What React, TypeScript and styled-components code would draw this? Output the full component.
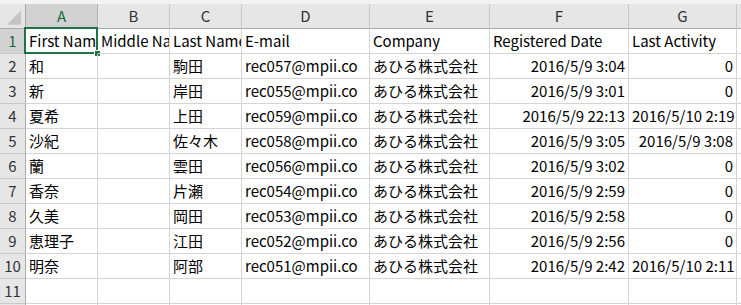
import React from 'react';
import styled, { createGlobalStyle } from 'styled-components';

const GlobalStyle = createGlobalStyle`
    html, body {
        margin: 0;
        padding: 0;
        background: #ffffff;
    }
    body {
        font-family: "Noto Sans CJK JP", "Noto Sans", sans-serif;
        overflow: hidden;
    }
`

const columns = [
    { label: 'A', width: 72 },
    { label: 'B', width: 72 },
    { label: 'C', width: 72 },
    { label: 'D', width: 128 },
    { label: 'E', width: 120 },
    { label: 'F', width: 139 },
    { label: 'G', width: 108 },
    { label: 'H', width: 80 },
];

type Row = { v: string[]; right?: number[] };

// right: indexes of cells that are right aligned (numbers / dates)
const rows: Row[] = [
    { v: ['First Nam', 'Middle Na', 'Last Name', 'E-mail', 'Company', 'Registered Date', 'Last Activity', 'Lead'] },
    { v: ['和', '', '駒田', 'rec057@mpii.co', 'あひる株式会社', '2016/5/9 3:04', '0', ''], right: [5, 6] },
    { v: ['新', '', '岸田', 'rec055@mpii.co', 'あひる株式会社', '2016/5/9 3:01', '0', ''], right: [5, 6] },
    { v: ['夏希', '', '上田', 'rec059@mpii.co', 'あひる株式会社', '2016/5/9 22:13', '2016/5/10 2:19', ''], right: [5, 6] },
    { v: ['沙紀', '', '佐々木', 'rec058@mpii.co', 'あひる株式会社', '2016/5/9 3:05', '2016/5/9 3:08', ''], right: [5, 6] },
    { v: ['蘭', '', '雲田', 'rec056@mpii.co', 'あひる株式会社', '2016/5/9 3:02', '0', ''], right: [5, 6] },
    { v: ['香奈', '', '片瀬', 'rec054@mpii.co', 'あひる株式会社', '2016/5/9 2:59', '0', ''], right: [5, 6] },
    { v: ['久美', '', '岡田', 'rec053@mpii.co', 'あひる株式会社', '2016/5/9 2:58', '0', ''], right: [5, 6] },
    { v: ['恵理子', '', '江田', 'rec052@mpii.co', 'あひる株式会社', '2016/5/9 2:56', '0', ''], right: [5, 6] },
    { v: ['明奈', '', '阿部', 'rec051@mpii.co', 'あひる株式会社', '2016/5/9 2:42', '2016/5/10 2:11', ''], right: [5, 6] },
    { v: ['', '', '', '', '', '', '', ''] },
    { v: ['', '', '', '', '', '', '', ''] },
];

export default function App() {
    return (
        <>
            <GlobalStyle />
            <Window>
                <TopStrip />
                <Sheet>
                    <Corner>
                        <svg width="26" height="25" viewBox="0 0 26 25">
                            <polygon points="7,21 22,21 22,6" fill="#c4c4c4" />
                        </svg>
                    </Corner>
                    {columns.map((c, i) => (
                        <ColHeader key={c.label} $active={i === 0}>{c.label}</ColHeader>
                    ))}
                    {rows.map((r, ri) => (
                        <React.Fragment key={ri}>
                            <RowHeader $active={ri === 0}>{ri + 1}</RowHeader>
                            {r.v.map((text, ci) => (
                                <Cell key={ci} $right={r.right?.includes(ci)}>
                                    <CellText $right={r.right?.includes(ci)}>{text}</CellText>
                                    {ri === 0 && ci === 0 && (
                                        <Selection>
                                            <Handle />
                                        </Selection>
                                    )}
                                </Cell>
                            ))}
                        </React.Fragment>
                    ))}
                </Sheet>
            </Window>
        </>
    );
}

const Window = styled.div`
    width: 741px;
    height: 305px;
    overflow: hidden;
    display: flex;
    flex-direction: column;
    background: #ffffff;
`

const TopStrip = styled.div`
    height: 4px;
    flex: none;
    background: #f3f3f3;
`

const Sheet = styled.div`
    display: grid;
    grid-template-columns: 26px ${columns.map(c => c.width + 'px').join(' ')};
    grid-template-rows: 25px repeat(${rows.length}, 25px);
    width: max-content;
`

const Corner = styled.div`
    background: #e6e6e6;
    border-right: 1px solid #ababab;
    border-bottom: 1px solid #ababab;
    box-sizing: border-box;
    display: flex;
    align-items: flex-start;
    justify-content: flex-start;
    svg { display: block; }
`

const ColHeader = styled.div<{ $active?: boolean }>`
    box-sizing: border-box;
    background: ${p => (p.$active ? '#d2d2d2' : '#e6e6e6')};
    border-right: 1px solid ${p => (p.$active ? '#b4b4b4' : '#c8c8c8')};
    border-bottom: 1px solid #ababab;
    color: ${p => (p.$active ? '#1d6a3e' : '#333333')};
    font-size: 15px;
    line-height: 23px;
    text-align: center;
`

const RowHeader = styled.div<{ $active?: boolean }>`
    box-sizing: border-box;
    background: ${p => (p.$active ? '#d2d2d2' : '#e6e6e6')};
    border-right: 1px solid #ababab;
    border-bottom: 1px solid #c8c8c8;
    color: ${p => (p.$active ? '#1d6a3e' : '#333333')};
    font-size: 15px;
    line-height: 24px;
    text-align: center;
`

const Cell = styled.div<{ $right?: boolean }>`
    position: relative;
    box-sizing: border-box;
    border-right: 1px solid #d4d4d4;
    border-bottom: 1px solid #d4d4d4;
    min-width: 0;
`

const CellText = styled.div<{ $right?: boolean }>`
    overflow: hidden;
    white-space: nowrap;
    color: #000000;
    font-size: 15px;
    line-height: 24px;
    padding: 0 3px 0 3px;
    text-align: ${p => (p.$right ? 'right' : 'left')};
`

const Selection = styled.div`
    position: absolute;
    left: -2px;
    top: -2px;
    right: -1px;
    bottom: -1px;
    border: 2px solid #217346;
    pointer-events: none;
`

const Handle = styled.div`
    position: absolute;
    right: -4px;
    bottom: -4px;
    width: 5px;
    height: 5px;
    background: #217346;
    border: 1px solid #ffffff;
    border-right: none;
    border-bottom: none;
`
